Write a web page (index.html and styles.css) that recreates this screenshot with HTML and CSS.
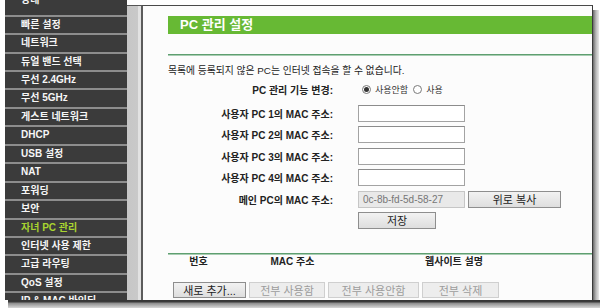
FILE: index.html
```html
<!DOCTYPE html>
<html lang="ko">
<head>
<meta charset="utf-8">
<link rel="stylesheet" href="styles.css">
</head>
<body>
<div class="page">
  <div class="main">
    <nav class="sidebar">
      <ul class="menu">
        <li>상태</li>
        <li>빠른 설정</li>
        <li>네트워크</li>
        <li>듀얼 밴드 선택</li>
        <li>무선 2.4GHz</li>
        <li>무선 5GHz</li>
        <li>게스트 네트워크</li>
        <li>DHCP</li>
        <li>USB 설정</li>
        <li>NAT</li>
        <li>포워딩</li>
        <li>보안</li>
        <li class="active">자녀 PC 관리</li>
        <li>인터넷 사용 제한</li>
        <li>고급 라우팅</li>
        <li>QoS 설정</li>
        <li>IP &amp; MAC 바인딩</li>
      </ul>
    </nav>
    <div class="strip"></div>
    <section class="content">
      <h1 class="title">PC 관리 설정</h1>
      <div class="divider"></div>
      <p class="desc">목록에 등록되지 않은 PC는 인터넷 접속을 할 수 없습니다.</p>
      <div class="switch">
        <span class="label">PC 관리 기능 변경:</span>
        <span class="radios">
          <span class="radio checked"></span><span class="rlabel">사용안함</span>
          <span class="radio"></span><span class="rlabel">사용</span>
        </span>
      </div>
      <div class="fields">
        <span class="label">사용자 PC 1의 MAC 주소:</span>
        <span class="ctrl"><span class="input"></span></span>
        <span class="label">사용자 PC 2의 MAC 주소:</span>
        <span class="ctrl"><span class="input"></span></span>
        <span class="label">사용자 PC 3의 MAC 주소:</span>
        <span class="ctrl"><span class="input"></span></span>
        <span class="label">사용자 PC 4의 MAC 주소:</span>
        <span class="ctrl"><span class="input"></span></span>
        <span class="label">메인 PC의 MAC 주소:</span>
        <span class="ctrl"><span class="input disabled">0c-8b-fd-5d-58-27</span><span class="btn copy">위로 복사</span></span>
        <span class="label"></span>
        <span class="ctrl"><span class="btn save">저장</span></span>
      </div>
      <div class="divider second"></div>
      <div class="thead">
        <span>번호</span>
        <span>MAC 주소</span>
        <span>웹사이트 설명</span>
      </div>
      <div class="actions">
        <span class="btn b1">새로 추가...</span>
        <span class="btn off b2">전부 사용함</span>
        <span class="btn off b3">전부 사용안함</span>
        <span class="btn off b4">전부 삭제</span>
      </div>
    </section>
    <div class="rshadow"></div>
  </div>
  <div class="bshadow"></div>
</div>
</body>
</html>
```
FILE: styles.css
```css
* { box-sizing: border-box; }
html, body { margin: 0; padding: 0; }
body {
  width: 600px;
  height: 308px;
  overflow: hidden;
  background: #ffffff;
  font-family: "Liberation Sans", "Noto Sans CJK KR", sans-serif;
  color: #222;
}
.page { display: flex; flex-direction: column; width: 600px; height: 308px; }
.main { display: flex; height: 300px; }

.sidebar {
  margin-left: 5px;
  width: 122px;
  background: #3b3b3b;
  overflow: hidden;
}
.menu {
  list-style: none;
  margin: -3.75px 0 0 0;
  padding: 0;
}
.menu li {
  border-top: 2px solid #8d8d8d;
  height: 18.45px;
  line-height: 15px;
  padding-left: 16px;
  color: #f6f6f6;
  font-size: 10px;
  font-weight: bold;
  white-space: nowrap;
  overflow: hidden;
}
.menu li:first-child { line-height: 4px; }
.menu li.active { color: #a8d430; }

.strip {
  margin-top: 5px;
  width: 14px;
  border-top: 1px solid #555;
  background: linear-gradient(to right, #c6c6c6 0, #c9c9c9 11px, #e2e2e2 11px, #e2e2e2 14px);
}

.content {
  margin-top: 5px;
  width: 452px;
  border-top: 1px solid #4a4a4a;
  border-left: 2px solid #5c5c5c;
  border-right: 1px solid #3a3a3a;
  background: #fcfcfc;
  padding-left: 25px;
  display: flex;
  flex-direction: column;
}
.title {
  margin: 10px 0 0 0;
  height: 18px;
  background: #67b934;
  color: #fff;
  font-size: 13px;
  font-weight: bold;
  line-height: 18px;
  padding-left: 12px;
}
.divider {
  margin-top: 20px;
  height: 2px;
  border-top: 1px solid #5e9f70;
  border-bottom: 1px solid #a9cdb3;
}
.desc {
  margin: 8px 0 0 0;
  height: 14px;
  line-height: 14px;
  font-size: 9.8px;
  color: #222;
  white-space: nowrap;
}
.label {
  text-align: right;
  font-size: 10px;
  font-weight: bold;
  color: #222;
  white-space: nowrap;
}
.switch {
  margin-top: 0.5px;
  display: grid;
  grid-template-columns: 165px 1fr;
  column-gap: 25px;
  height: 22px;
  align-items: center;
}
.radios { display: flex; align-items: center; margin-left: 4px; }
.radio {
  width: 9px; height: 9px;
  border: 1px solid #7a7a7a;
  border-radius: 50%;
  background: #fff;
  display: flex; align-items: center; justify-content: center;
}
.radio.checked::after {
  content: "";
  width: 5px; height: 5px; border-radius: 50%;
  background: #333;
}
.rlabel { font-size: 9px; color: #333; margin: 0 5px 0 4px; }

.fields {
  margin-top: 2.3px;
  display: grid;
  grid-template-columns: 165px 1fr;
  grid-auto-rows: 21.4px;
  column-gap: 25px;
  align-items: center;
}
.ctrl { display: flex; align-items: center; gap: 3px; }
.input {
  width: 107px;
  height: 17px;
  border: 1px solid #a3a3a3;
  border-top-color: #8c8c8c;
  background: #fff;
  font-size: 10px;
  line-height: 15px;
  padding-left: 4px;
  color: #777;
}
.input.disabled { background: #e9e9e9; border-color: #c6c6c6; }
.btn {
  display: flex; align-items: center; justify-content: center;
  height: 17px;
  border: 1px solid #8e8e8e;
  background: linear-gradient(#f2f2f2, #dedede);
  font-size: 11px;
  color: #222;
  white-space: nowrap;
}
.copy { width: 93px; }
.save { width: 78px; }

.divider.second { margin-top: 21.8px; }
.thead {
  margin-top: 0;
  display: grid;
  grid-template-columns: 61px 127px 196px;
  height: 14px;
  line-height: 14px;
  font-size: 10px;
  font-weight: bold;
  text-align: center;
}
.actions {
  margin: 13px 0 0 5px;
  display: flex;
  gap: 3px;
}
.actions .btn { height: 16px; }
.btn.off { color: #9c9c9c; border-color: #cfcfcf; background: #ededed; }
.b1 { width: 73px; }
.b2 { width: 76px; }
.b3 { width: 91px; }
.b4 { width: 77px; }

.rshadow {
  margin-top: 10px;
  width: 6px;
  background: linear-gradient(to right, #6a6a6a, #b9b9b9 3px, #e8e8e8);
}
.bshadow {
  margin-left: 8px;
  width: 592px;
  height: 8px;
  background: linear-gradient(#343434 0, #3c3c3c 2px, #8a8a8a 3px, #a9a9a9 5px, #d8d8d8 8px);
}
```
